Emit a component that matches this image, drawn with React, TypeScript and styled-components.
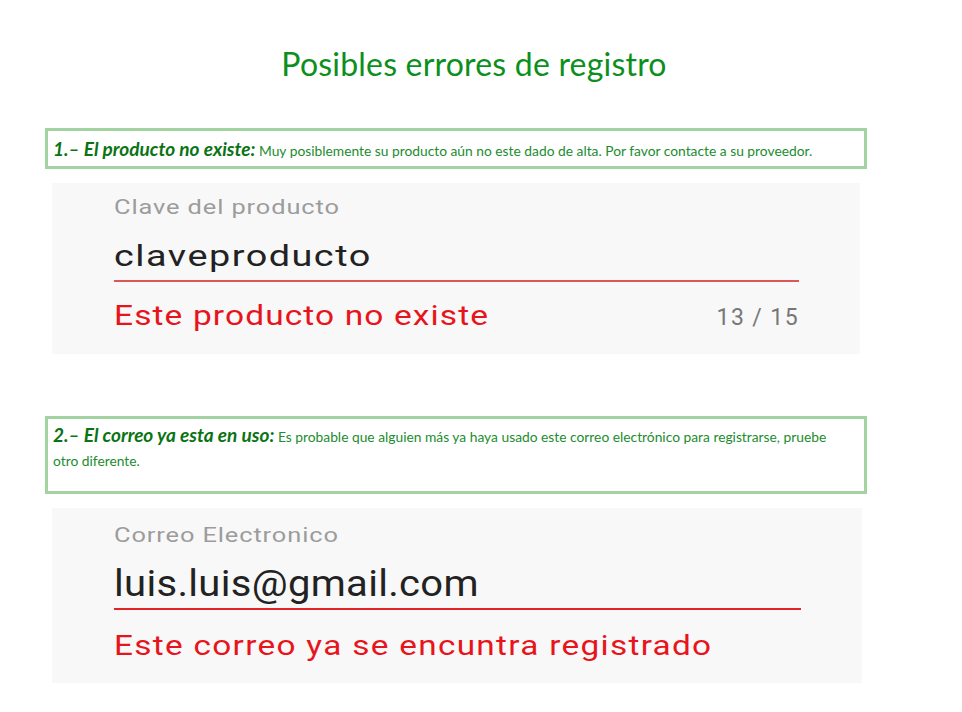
import React from "react";
import styled, { createGlobalStyle } from "styled-components";

const Global = createGlobalStyle`
  html, body { margin: 0; padding: 0; background: #ffffff; }
  body { width: 962px; height: 712px; overflow: hidden; }
`;

const Page = styled.div`
  display: flex;
  flex-direction: column;
  padding: 44px 0 0 45px;
  width: 822px;
`;

const Title = styled.h1`
  margin: 0 0 44px 0;
  font-family: Lato, "Open Sans", sans-serif;
  font-weight: 400;
  font-size: 32px;
  line-height: 40px;
  color: #0c8f1c;
  text-align: center;
  padding-left: 36px;
  letter-spacing: 0.2px;
`;

const NoteBox = styled.div<{ $minH?: number; $mt?: number; $pt: number; $pb: number }>`
  margin-top: ${(p) => p.$mt ?? 0}px;
  border: 3px solid #a3d3a0;
  padding: ${(p) => p.$pt}px 24px ${(p) => p.$pb}px 5px;
  min-height: ${(p) => p.$minH ?? 0}px;
  font-family: Lato, "Open Sans", sans-serif;
  line-height: 24px;
  color: #218c2e;
  font-size: 13.8px;
`;

const NoteLine = styled.div`
  height: 24px;
  white-space: nowrap;
`;

const NoteTitle = styled.span`
  font-weight: 700;
  font-style: italic;
  font-size: 19px;
  line-height: 20px;
  color: #0a7415;
`;

const Card = styled.div<{ $mt: number; $w: number; $pt: number; $pb: number; $pr: number }>`
  margin: ${(p) => p.$mt}px 0 0 7px;
  width: ${(p) => p.$w}px;
  box-sizing: border-box;
  background: #f8f8f8;
  padding: ${(p) => p.$pt}px ${(p) => p.$pr}px ${(p) => p.$pb}px 62px;
  display: flex;
  flex-direction: column;
  font-family: Roboto, "Liberation Sans", sans-serif;
`;

const Stretch = styled.div<{ $sx: number }>`
  transform: scaleX(${(p) => p.$sx});
  transform-origin: left center;
`;

const Label = styled(Stretch)`
  font-size: 20px;
  line-height: 24px;
  color: #9c9c9c;
  letter-spacing: 0.7px;
`;

const Value = styled(Stretch)<{ $size: number; $lh: number; $mt: number; $ls: number }>`
  margin-top: ${(p) => p.$mt}px;
  font-size: ${(p) => p.$size}px;
  line-height: ${(p) => p.$lh}px;
  letter-spacing: ${(p) => p.$ls}px;
  color: #222222;
`;

const Underline = styled.div<{ $mt: number; $color: string }>`
  margin-top: ${(p) => p.$mt}px;
  height: 2px;
  background: ${(p) => p.$color};
`;

const HelpRow = styled.div<{ $mt: number }>`
  margin-top: ${(p) => p.$mt}px;
  display: flex;
  justify-content: space-between;
  align-items: baseline;
`;

const ErrorText = styled(Stretch)<{ $size: number; $lh: number; $ls: number }>`
  font-size: ${(p) => p.$size}px;
  line-height: ${(p) => p.$lh}px;
  letter-spacing: ${(p) => p.$ls}px;
  color: #e8141c;
`;

const Counter = styled.div`
  font-size: 23px;
  color: #777777;
  letter-spacing: 1.4px;
`;

export default function App() {
  return (
    <>
      <Global />
      <Page>
        <Title>Posibles errores de registro</Title>

        <NoteBox $pt={8} $pb={3}>
          <NoteLine>
            <NoteTitle>1.– El producto no existe:</NoteTitle> Muy posiblemente su producto aún no este dado de alta. Por favor contacte a su proveedor.
          </NoteLine>
        </NoteBox>

        <Card $mt={14} $w={808} $pt={12} $pb={22} $pr={61}>
          <Label $sx={1.27}>Clave del producto</Label>
          <Value $sx={1.26} $size={30} $lh={36} $mt={19} $ls={1.2}>claveproducto</Value>
          <Underline $mt={6} $color="#dc5757" />
          <HelpRow $mt={18}>
            <ErrorText $sx={1.24} $size={27} $lh={32} $ls={0.9}>Este producto no existe</ErrorText>
            <Counter>13 / 15</Counter>
          </HelpRow>
        </Card>

        <NoteBox $minH={61} $mt={62} $pt={6} $pb={5}>
          <NoteLine>
            <NoteTitle>2.– El correo ya esta en uso:</NoteTitle> Es probable que alguien más ya haya usado este correo electrónico para registrarse, pruebe
          </NoteLine>
          <NoteLine>otro diferente.</NoteLine>
        </NoteBox>

        <Card $mt={14} $w={810} $pt={15} $pb={20} $pr={61}>
          <Label $sx={1.27}>Correo Electronico</Label>
          <Value $sx={1.11} $size={36} $lh={42} $mt={16} $ls={0.3}>luis.luis@gmail.com</Value>
          <Underline $mt={3} $color="#e22424" />
          <HelpRow $mt={19}>
            <ErrorText $sx={1.19} $size={28} $lh={34} $ls={1.1}>Este correo ya se encuntra registrado</ErrorText>
          </HelpRow>
        </Card>
      </Page>
    </>
  );
}
